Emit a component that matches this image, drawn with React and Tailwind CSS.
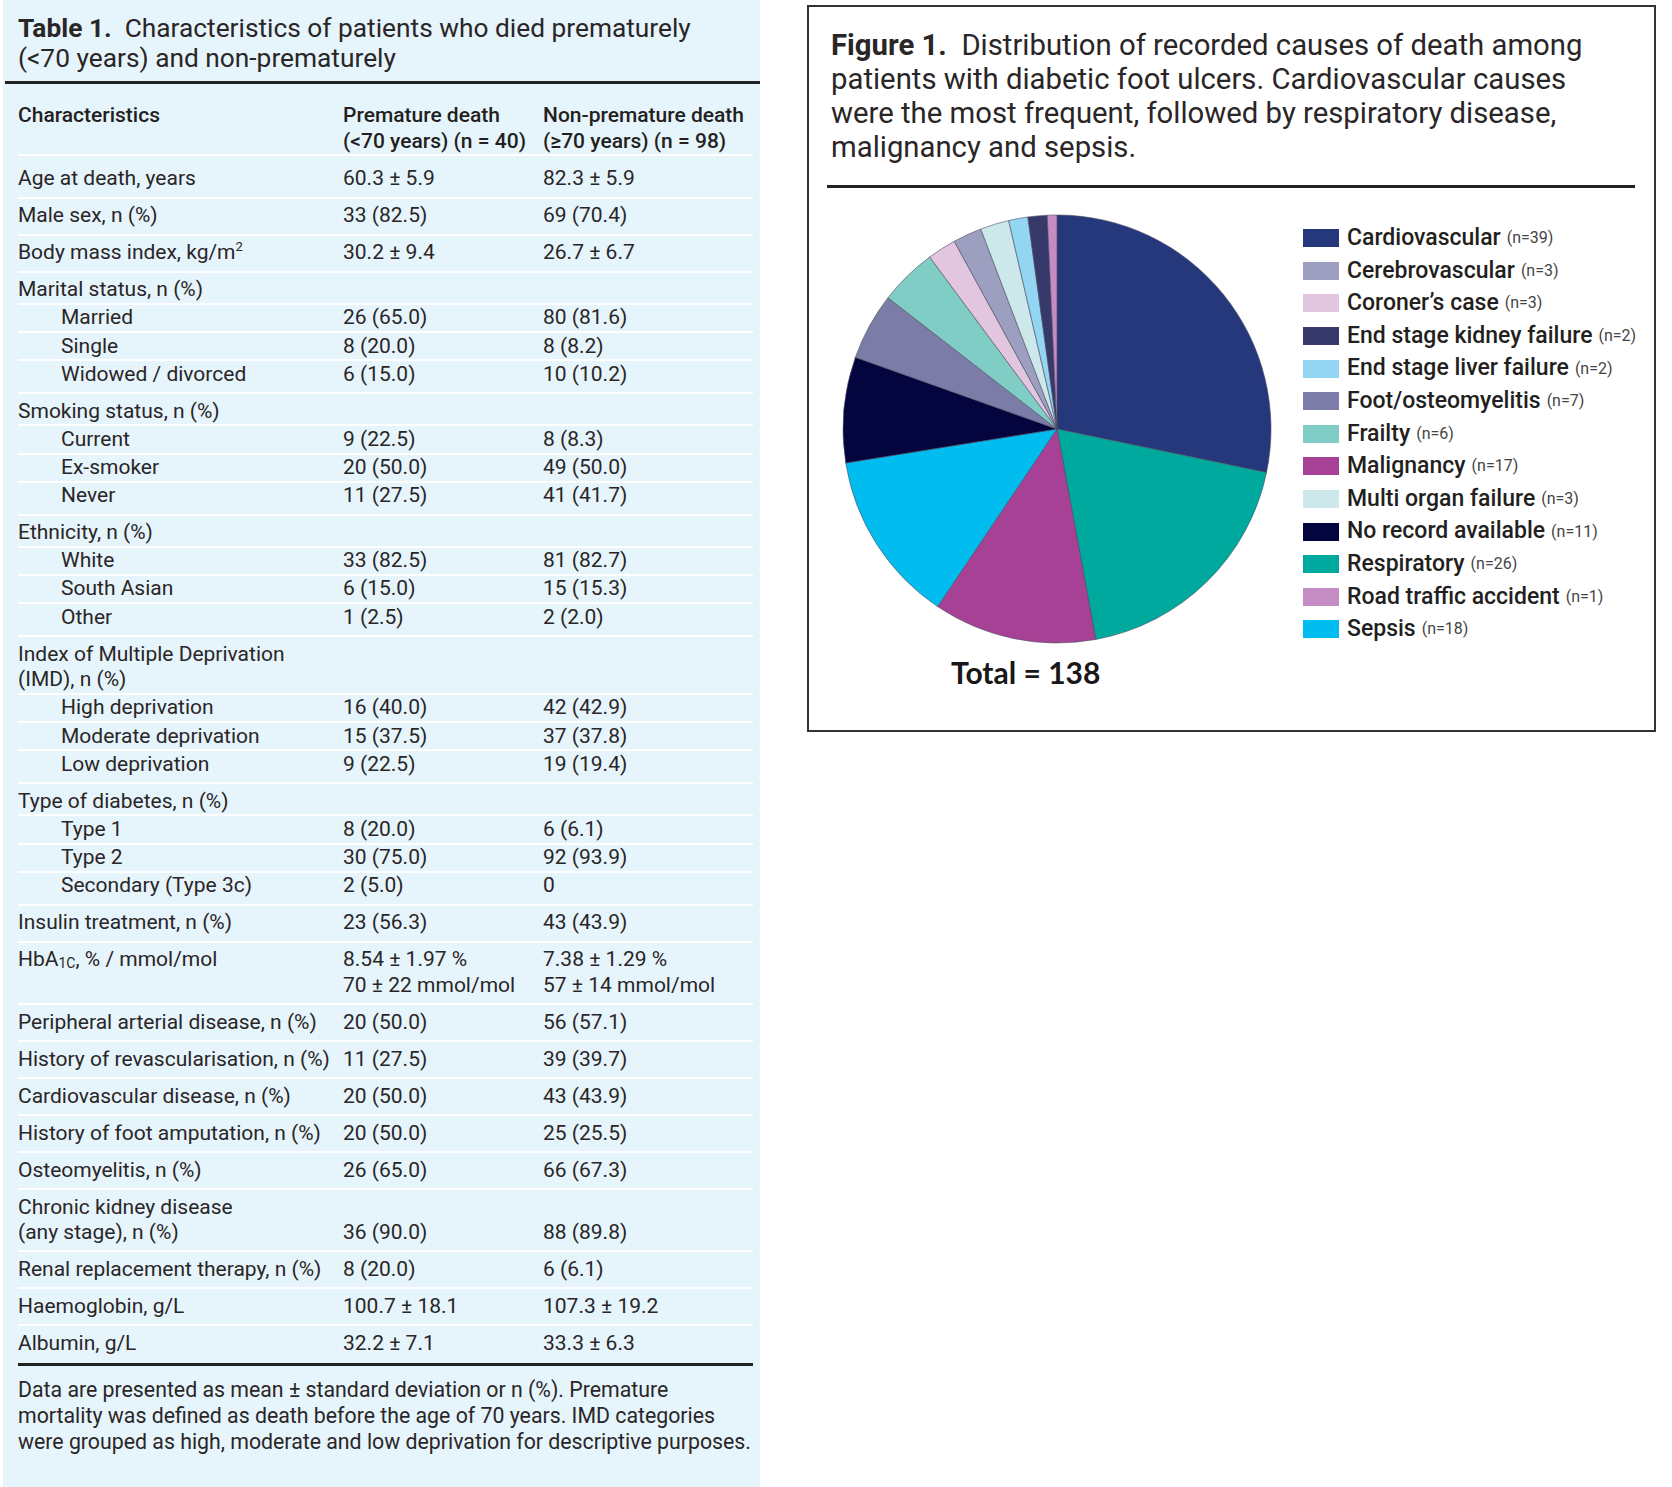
import React from "react";

const slices = [
    {name: "Cardiovascular", n: 39, color: "#25387c"},
    {name: "Respiratory", n: 26, color: "#00a99d"},
    {name: "Malignancy", n: 17, color: "#a64195"},
    {name: "Sepsis", n: 18, color: "#00bcef"},
    {name: "No record available", n: 11, color: "#04043e"},
    {name: "Foot/osteomyelitis", n: 7, color: "#7c7ca9"},
    {name: "Frailty", n: 6, color: "#80cdc6"},
    {name: "Coroner’s case", n: 3, color: "#e2c6e0"},
    {name: "Cerebrovascular", n: 3, color: "#9d9fc0"},
    {name: "Multi organ failure", n: 3, color: "#cde8ea"},
    {name: "End stage liver failure", n: 2, color: "#93d6f4"},
    {name: "End stage kidney failure", n: 2, color: "#38396b"},
    {name: "Road traffic accident", n: 1, color: "#c58cc4"},
];

const legend = [
    "Cardiovascular",
    "Cerebrovascular",
    "Coroner’s case",
    "End stage kidney failure",
    "End stage liver failure",
    "Foot/osteomyelitis",
    "Frailty",
    "Malignancy",
    "Multi organ failure",
    "No record available",
    "Respiratory",
    "Road traffic accident",
    "Sepsis",
];

// table body: single rows and grouped rows
const body = [
    {label: "Age at death, years", a: "60.3 ± 5.9", b: "82.3 ± 5.9"},
    {label: "Male sex, n (%)", a: "33 (82.5)", b: "69 (70.4)"},
    {label: <>Body mass index, kg/m<sup className="text-[13px] relative -top-[8px]">2</sup></>, a: "30.2 ± 9.4", b: "26.7 ± 6.7"},
    {
        label: "Marital status, n (%)",
        items: [["Married", "26 (65.0)", "80 (81.6)"], ["Single", "8 (20.0)", "8 (8.2)"], ["Widowed / divorced", "6 (15.0)", "10 (10.2)"]],
    },
    {
        label: "Smoking status, n (%)",
        items: [["Current", "9 (22.5)", "8 (8.3)"], ["Ex-smoker", "20 (50.0)", "49 (50.0)"], ["Never", "11 (27.5)", "41 (41.7)"]],
    },
    {
        label: "Ethnicity, n (%)",
        items: [["White", "33 (82.5)", "81 (82.7)"], ["South Asian", "6 (15.0)", "15 (15.3)"], ["Other", "1 (2.5)", "2 (2.0)"]],
    },
    {
        label: <>Index of Multiple Deprivation<br/>(IMD), n (%)</>,
        items: [["High deprivation", "16 (40.0)", "42 (42.9)"], ["Moderate deprivation", "15 (37.5)", "37 (37.8)"], ["Low deprivation", "9 (22.5)", "19 (19.4)"]],
    },
    {
        label: "Type of diabetes, n (%)",
        items: [["Type 1", "8 (20.0)", "6 (6.1)"], ["Type 2", "30 (75.0)", "92 (93.9)"], ["Secondary (Type 3c)", "2 (5.0)", "0"]],
    },
    {label: "Insulin treatment, n (%)", a: "23 (56.3)", b: "43 (43.9)"},
    {
        label: <>HbA<sub className="text-[14px] relative top-[2px]">1C</sub>, % / mmol/mol</>,
        a: <>8.54 ± 1.97 %<br/>70 ± 22 mmol/mol</>,
        b: <>7.38 ± 1.29 %<br/>57 ± 14 mmol/mol</>,
    },
    {label: "Peripheral arterial disease, n (%)", a: "20 (50.0)", b: "56 (57.1)"},
    {label: "History of revascularisation, n (%)", a: "11 (27.5)", b: "39 (39.7)"},
    {label: "Cardiovascular disease, n (%)", a: "20 (50.0)", b: "43 (43.9)"},
    {label: "History of foot amputation, n (%)", a: "20 (50.0)", b: "25 (25.5)"},
    {label: "Osteomyelitis, n (%)", a: "26 (65.0)", b: "66 (67.3)"},
    {label: <>Chronic kidney disease<br/>(any stage), n (%)</>, a: "36 (90.0)", b: "88 (89.8)", bottom: true},
    {label: "Renal replacement therapy, n (%)", a: "8 (20.0)", b: "6 (6.1)"},
    {label: "Haemoglobin, g/L", a: "100.7 ± 18.1", b: "107.3 ± 19.2"},
    {label: "Albumin, g/L", a: "32.2 ± 7.1", b: "33.3 ± 6.3"},
];

const Row = ({label, a, b, bottom, className}) => (
    <div className={`grid grid-cols-[325px_200px_1fr] ${bottom ? "items-end" : "items-start"} ${className}`}>
        <div className="whitespace-nowrap">{label}</div>
        <div className="whitespace-nowrap">{a}</div>
        <div className="whitespace-nowrap">{b}</div>
    </div>
);

const Pie = () => {
    const total = slices.reduce((s, x) => s + x.n, 0);
    const cx = 216, cy = 216, r = 214;
    let acc = 0;
    return (
        <svg width="432" height="432" viewBox="0 0 432 432">
            {slices.map((s) => {
                const a0 = (acc / total) * Math.PI * 2;
                acc += s.n;
                const a1 = (acc / total) * Math.PI * 2;
                const x0 = cx + r * Math.sin(a0), y0 = cy - r * Math.cos(a0);
                const x1 = cx + r * Math.sin(a1), y1 = cy - r * Math.cos(a1);
                const large = a1 - a0 > Math.PI ? 1 : 0;
                return (
                    <path
                        key={s.name}
                        d={`M${cx},${cy} L${x0},${y0} A${r},${r} 0 ${large} 1 ${x1},${y1} Z`}
                        fill={s.color}
                        stroke="#4b4b5e"
                        strokeWidth="0.6"
                    />
                );
            })}
        </svg>
    );
};

const App = () => {
    return (
        <div className="flex w-[1672px] min-h-[1487px] bg-white text-[#2a2627] font-['Roboto',sans-serif]">
            {/* Table 1 */}
            <div className="ml-[3px] w-[757px] bg-[#e6f4fb] pb-[40px]">
                <div className="pl-[15px] pt-[13px] text-[26.3px] leading-[30px] whitespace-nowrap">
                    <div><span className="font-bold">Table 1.</span>&nbsp; Characteristics of patients who died prematurely</div>
                    <div>(&lt;70 years) and non-prematurely</div>
                </div>
                <div className="ml-[2px] mt-[8px] h-[3px] bg-[#222]"></div>

                <div className="ml-[15px] mr-[7px] text-[21px] leading-[25.6px]">
                    <Row
                        className="pt-[19px] border-b-2 border-white font-medium text-[#231f20]"
                        label="Characteristics"
                        a={<>Premature death<br/>(&lt;70 years) (n = 40)</>}
                        b={<>Non-premature death<br/>(≥70 years) (n = 98)</>}
                    />
                    {body.map((r, i) =>
                        r.items ? (
                            <div key={i}>
                                <Row className="border-t-2 border-white pt-[4.7px]" label={r.label}/>
                                {r.items.map((it, j) => (
                                    <Row
                                        key={j}
                                        className={`border-t-2 border-white pt-[0.35px] ${j === r.items.length - 1 ? "pb-[4.7px]" : "pb-[0.35px]"}`}
                                        label={<span className="pl-[43px]">{it[0]}</span>}
                                        a={it[1]}
                                        b={it[2]}
                                    />
                                ))}
                            </div>
                        ) : (
                            <Row
                                key={i}
                                className={i === 0 ? "pt-[10.2px] pb-[4.7px]" : "border-t-2 border-white py-[4.7px]"}
                                label={r.label}
                                a={r.a}
                                b={r.b}
                                bottom={r.bottom}
                            />
                        )
                    )}
                    <div className="mt-[2px] h-[3px] bg-[#222]"></div>
                    <div className="mt-[11px] text-[21.3px] whitespace-nowrap">
                        <div>Data are presented as mean ± standard deviation or n (%). Premature</div>
                        <div>mortality was defined as death before the age of 70 years. IMD categories</div>
                        <div>were grouped as high, moderate and low deprivation for descriptive purposes.</div>
                    </div>
                </div>
            </div>

            {/* Figure 1 */}
            <div className="ml-[47px] mt-[5px]">
                <div className="w-[849px] h-[727px] border-2 border-[#333]">
                    <div className="pl-[22px] pt-[21px] text-[29.3px] leading-[34px] whitespace-nowrap">
                        <div><span className="font-bold">Figure 1.</span>&nbsp; Distribution of recorded causes of death among</div>
                        <div>patients with diabetic foot ulcers. Cardiovascular causes</div>
                        <div>were the most frequent, followed by respiratory disease,</div>
                        <div>malignancy and sepsis.</div>
                    </div>
                    <div className="ml-[18px] mt-[21px] w-[808px] h-[3px] bg-[#222]"></div>

                    <div className="flex mt-[25px] pl-[32px]">
                        <div className="flex flex-col">
                            <Pie/>
                            <div className="pl-[110px] mt-[10px] text-[30px] leading-[34px] font-bold font-['Lato',sans-serif] text-[#1a1718]">
                                Total = 138
                            </div>
                        </div>
                        <div className="ml-[30px] mt-[9px] flex flex-col">
                            {legend.map((name) => {
                                const s = slices.find((x) => x.name === name);
                                return (
                                    <div key={name} className="flex items-center h-[32.6px] whitespace-nowrap">
                                        <div className="w-[36px] h-[18px] mr-[8px]" style={{backgroundColor: s.color}}></div>
                                        <span className="text-[23px] font-medium text-[#231f20]">{name}</span>
                                        <span className="ml-[6px] text-[16px] text-[#444]">(n={s.n})</span>
                                    </div>
                                );
                            })}
                        </div>
                    </div>
                </div>
            </div>
        </div>
    );
};

export default App;
